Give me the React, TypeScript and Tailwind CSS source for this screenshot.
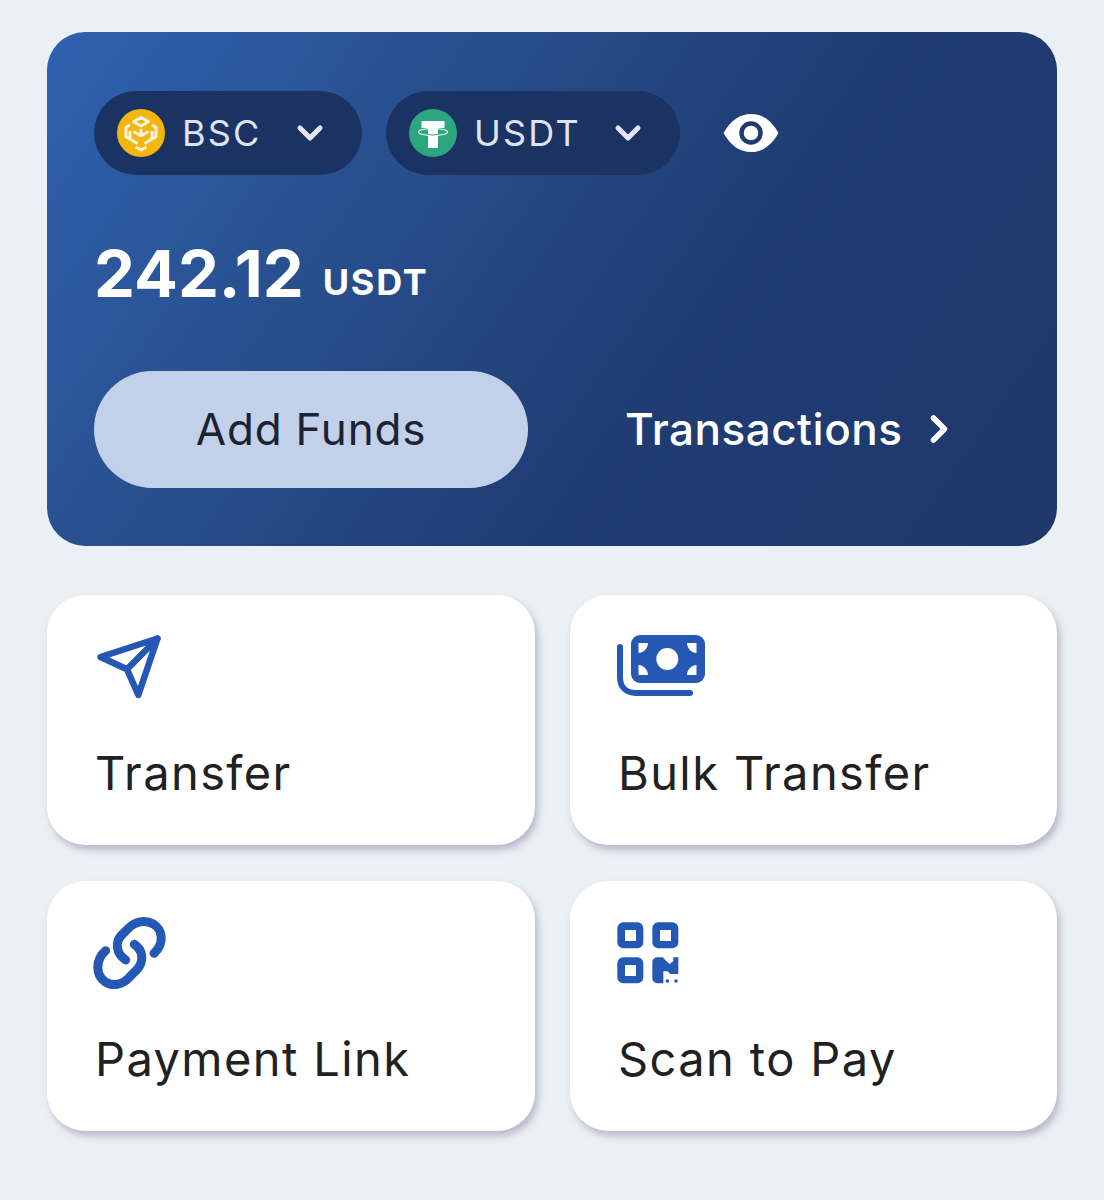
import { ChevronDown, ChevronRight } from "lucide-react";
import type { ReactNode } from "react";

const font = "font-['Inter','Noto_Sans',sans-serif]";

function BnbLogo() {
  return (
    <svg viewBox="0 0 48 48" className="h-12 w-12 shrink-0">
      <circle cx="24" cy="24" r="24" fill="#f2b60f" />
      <g fill="none" stroke="#fff" strokeOpacity="0.85" strokeWidth="3" strokeLinejoin="round">
        <path d="M24 8.500l7.500 4.200-7.500 4.300-7.500-4.300z" />
        <path d="M24 20v7M24 27l-7.500-4.500M24 27l7.500-4.500" />
        <path d="M13 16l-4 2.300v9.500l3.500 2M35 16l4 2.300v9.500l-3.500 2" />
        <path d="M13 22v8l7.500 4.500M35 22v8l-7.500 4.500" />
        <path d="M18.500 38l5.500 2.800 5.500-2.800" />
      </g>
    </svg>
  );
}

function TetherLogo() {
  return (
    <svg viewBox="0 0 48 48" className="h-12 w-12 shrink-0">
      <circle cx="24" cy="24" r="24" fill="#2ba67e" />
      <path d="M12.500 12h23v7H29v20H19V19h-6.500z" fill="#fff" />
      <ellipse cx="24" cy="23" rx="14.500" ry="3.500" fill="none" stroke="#fff" strokeWidth="1.100" />
      <path d="M19 25.500q5 1 10 0" fill="none" stroke="#2ba67e" strokeWidth="1" />
    </svg>
  );
}

function EyeIcon() {
  return (
    <svg viewBox="0 0 56 38" className="h-[38px] w-14">
      <path d="M0.500 19C8 6 17 0 28 0s20 6 27.500 19C48 32 39 38 28 38S8 32 0.500 19z" fill="#fff" />
      <circle cx="28" cy="19" r="9.500" fill="none" stroke="#1f3a70" strokeWidth="4.500" />
    </svg>
  );
}

function SendIcon() {
  return (
    <svg viewBox="0 0 72 72" className="-ml-[3px] h-[72px] w-[72px] text-[#2558b5]">
      <path
        d="M65.500 8.500L8.500 27 35 39.300 46.300 65 65.500 8.500zM65.500 8.500L35 39.300"
        fill="none"
        stroke="currentColor"
        strokeWidth="6.500"
        strokeLinejoin="round"
        strokeLinecap="round"
      />
    </svg>
  );
}

function CashIcon() {
  return (
    <svg viewBox="0 0 92 72" className="-ml-[3px] h-[72px] w-[92px] text-[#2558b5]">
      <rect x="16" y="5" width="74" height="48" rx="9" fill="currentColor" />
      <circle cx="52.300" cy="29" r="11" fill="#fff" />
      <path d="M23.500 13h9.500c0 5-4 9.500-9.500 10zM81.500 13H72c0 5 4 9.500 9.500 10zM23.500 45H33c0-5-4-9.500-9.500-10zM81.500 45H72c0-5 4-9.500 9.500-10z" fill="#fff" />
      <path d="M5 17v30c0 10 6 16 16 16h54" fill="none" stroke="currentColor" strokeWidth="6" strokeLinecap="round" />
    </svg>
  );
}

function LinkIcon() {
  return (
    <svg viewBox="0 0 270 255" className="-ml-[10px] h-[85px] w-[90px] text-[#2558b5]">
      <g fill="none" stroke="currentColor" strokeWidth="27" strokeLinecap="round">
        <path d="M207 130C240 100 232 58 205 42 180 28 150 35 130 55L110 75C90 95 92 130 122 150" />
        <path d="M62 122C30 150 32 195 60 215 85 232 115 222 135 200L155 180C178 155 175 120 148 103" />
      </g>
    </svg>
  );
}

function QrIcon() {
  return (
    <svg viewBox="0 0 240 225" className="-ml-[8px] h-[75px] w-20 text-[#2558b5]">
      <path
        fillRule="evenodd"
        fill="currentColor"
        d="M40 22h42a18 18 0 0 1 18 18v42a18 18 0 0 1-18 18H40a18 18 0 0 1-18-18V40a18 18 0 0 1 18-18zM45 45v33h33V45zM145 22h42a18 18 0 0 1 18 18v42a18 18 0 0 1-18 18h-42a18 18 0 0 1-18-18V40a18 18 0 0 1 18-18zM150 45v33h33V45zM40 127h42a18 18 0 0 1 18 18v42a18 18 0 0 1-18 18H40a18 18 0 0 1-18-18v-42a18 18 0 0 1 18-18zM45 150v33h33v-33z"
      />
      <path
        fill="currentColor"
        d="M127 142a15 15 0 0 1 15-15h16l20 20 12-8v-12h15v50h-24l-8-8-13 0v36h-18a15 15 0 0 1-15-15z"
      />
      <circle cx="172" cy="198" r="5.500" fill="currentColor" />
      <circle cx="198" cy="198" r="5.500" fill="currentColor" />
    </svg>
  );
}

function TokenPill({ logo, label, wide }: { logo: ReactNode; label: string; wide?: boolean }) {
  return (
    <div
      className={`flex h-[84px] items-center rounded-full bg-[#1b3363] pl-[23px] ${wide ? "w-[294px]" : "w-[268px]"}`}
    >
      {logo}
      <span className="ml-[17px] text-[36px] leading-none tracking-[2.200px] text-[#dde3f1]">{label}</span>
      <ChevronDown className="ml-auto mr-[32px] h-10 w-10 text-[#e3e7f3]" strokeWidth={3} />
    </div>
  );
}

function ActionCard({ icon, label, iconClass }: { icon: ReactNode; label: string; iconClass: string }) {
  return (
    <div className="flex h-[250px] flex-col rounded-[38px] bg-white pl-[48px] shadow-[3px_5px_7px_rgba(170,165,190,0.75)]">
      <div className={iconClass}>{icon}</div>
      <div className="mt-auto mb-[44px] text-[47px] leading-[56px] tracking-[1.400px] text-[#212121]">{label}</div>
    </div>
  );
}

export default function App() {
  return (
    <div className={`${font} flex h-[1200px] w-[1104px] flex-col bg-[#ebf0f4] px-[47px] pt-[32px]`}>
      <div className="flex h-[514px] flex-col rounded-[38px] bg-[linear-gradient(125deg,#2f62b0_0%,#28508f_30%,#1f3c73_62%,#1e386c_100%)] px-[47px] pt-[59px]">
        <div className="flex items-center gap-[24px]">
          <TokenPill logo={<BnbLogo />} label="BSC" />
          <TokenPill logo={<TetherLogo />} label="USDT" wide />
          <div className="ml-[19px]">
            <EyeIcon />
          </div>
        </div>
        <div className="mt-[59px] flex h-[80px] items-baseline text-white">
          <span className="text-[65px] font-bold leading-[80px]">242.12</span>
          <span className="ml-[19px] -translate-y-[2px] text-[36px] font-bold tracking-[1.800px]">USDT</span>
        </div>
        <div className="mt-[57px] flex items-center">
          <div className="flex h-[117px] w-[434px] items-center justify-center rounded-full bg-[#c3d0ea] pb-[2px] text-[44px] tracking-[0.800px] text-[#1c2230]">
            Add Funds
          </div>
          <div className="ml-[97px] flex items-center pb-[2px] text-[44px] font-medium tracking-[0.500px] text-white">
            Transactions
            <ChevronRight className="ml-[15px] h-11 w-11" strokeWidth={3} />
          </div>
        </div>
      </div>
      <div className="mt-[49px] grid grid-cols-[488px_487px] gap-x-[35px] gap-y-[36px]">
        <ActionCard icon={<SendIcon />} label="Transfer" iconClass="pt-[35px]" />
        <ActionCard icon={<CashIcon />} label="Bulk Transfer" iconClass="pt-[35px]" />
        <ActionCard icon={<LinkIcon />} label="Payment Link" iconClass="pt-[29px]" />
        <ActionCard icon={<QrIcon />} label="Scan to Pay" iconClass="pt-[34px]" />
      </div>
    </div>
  );
}
